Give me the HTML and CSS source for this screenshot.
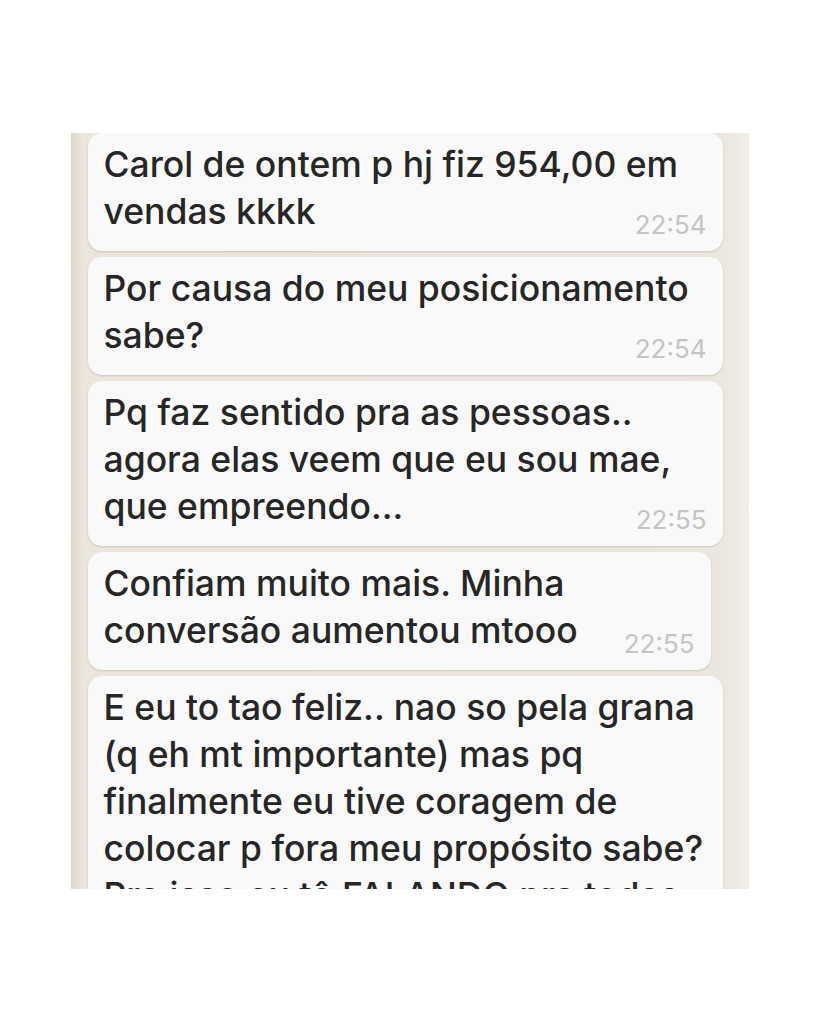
FILE: index.html
```html
<!doctype html>
<html lang="pt-BR">
<head>
    <meta charset="UTF-8">
    <meta name="viewport" content="width=device-width, initial-scale=1.0">
    <title>Conversa</title>
    <link rel="stylesheet" href="styles.css">
</head>
<body>
    <!-- Chat screenshot -->
    <div class="chat">
        <div class="bubble">
            <p>Carol de ontem p hj fiz 954,00 em<br>vendas kkkk</p>
            <span class="time">22:54</span>
        </div>
        <div class="bubble">
            <p>Por causa do meu posicionamento<br>sabe?</p>
            <span class="time">22:54</span>
        </div>
        <div class="bubble">
            <p>Pq faz sentido pra as pessoas..<br>agora elas veem que eu sou mae,<br>que empreendo...</p>
            <span class="time">22:55</span>
        </div>
        <div class="bubble narrow">
            <p>Confiam muito mais. Minha<br>conversão aumentou mtooo</p>
            <span class="time">22:55</span>
        </div>
        <div class="bubble">
            <p>E eu to tao feliz.. nao so pela grana<br>(q eh mt importante) mas pq<br>finalmente eu tive coragem de<br>colocar p fora meu propósito sabe?<br>Pra isso eu tô FALANDO pra todas</p>
        </div>
    </div>
</body>
</html>
```

FILE: styles.css
```css
/* General Styles */
body {
    margin: 0;
    background-color: #fff;
    font-family: 'Inter', 'Liberation Sans', sans-serif;
}

/* Chat frame */
.chat {
    width: 678px;
    height: 756px;
    margin: 133px auto 0;
    padding: 0 26px 0 17px;
    box-sizing: border-box;
    background-color: #ebe6de;
    background-image: linear-gradient(90deg, #e0d9cc 0, #ebe5dc 12px, #ebe6de 96%, #f1eee8 100%);
    overflow: hidden;
    display: flex;
    flex-direction: column;
    gap: 6px;
}

/* Bubbles */
.bubble {
    position: relative;
    flex-shrink: 0;
    padding: 8px 16px 16px;
    background-color: #f9f9f9;
    border-radius: 14px;
    box-shadow: 0 1px 2px rgba(0, 0, 0, 0.14);
}

.bubble.narrow {
    margin-right: 12px;
}

.bubble p {
    margin: 0;
    font-size: 35.5px;
    font-weight: 500;
    line-height: 47px;
    color: #262626;
    white-space: nowrap;
}

.time {
    position: absolute;
    right: 16px;
    bottom: 13px;
    font-size: 26px;
    line-height: 1;
    color: #c4c4c4;
}
```
